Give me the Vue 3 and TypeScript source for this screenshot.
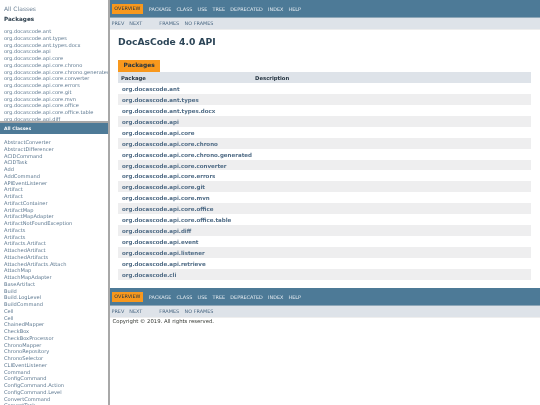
<script setup lang="ts">
const packages: string[] = [
  'org.docascode.ant','org.docascode.ant.types','org.docascode.ant.types.docx','org.docascode.api','org.docascode.api.core',
  'org.docascode.api.core.chrono','org.docascode.api.core.chrono.generated','org.docascode.api.core.converter','org.docascode.api.core.errors',
  'org.docascode.api.core.git','org.docascode.api.core.mvn','org.docascode.api.core.office','org.docascode.api.core.office.table',
  'org.docascode.api.diff','org.docascode.api.event','org.docascode.api.listener','org.docascode.api.retrieve','org.docascode.cli'
]
const classes: string[] = [
  'AbstractConverter','AbstractDifferencer','ACIDCommand','ACIDTask','Add','AddCommand','APIEventListener','Artifact','Artifact',
  'ArtifactContainer','ArtifactMap','ArtifactMapAdapter','ArtifactNotFoundException','Artifacts','Artifacts','Artifacts.Artifact',
  'AttachedArtifact','AttachedArtifacts','AttachedArtifacts.Attach','AttachMap','AttachMapAdapter','BaseArtifact','Build','Build.LogLevel',
  'BuildCommand','Cell','Cell','ChainedMapper','CheckBox','CheckBoxProcessor','ChronoMapper','ChronoRepository','ChronoSelector',
  'CLIEventListener','Command','ConfigCommand','ConfigCommand.Action','ConfigCommand.Level','ConvertCommand','ConvertTask'
]
const nav: string[] = ['PACKAGE','CLASS','USE','TREE','DEPRECATED','INDEX','HELP']
</script>

<template>
  <div class="page">
    <aside class="side">
      <div class="pkgpane">
        <div class="allclasses">All Classes</div>
        <div class="pkgtitle">Packages</div>
        <ul class="list">
          <li v-for="p in packages" :key="p">{{ p }}</li>
        </ul>
      </div>
      <div class="classpane">
        <div class="bar">All Classes</div>
        <ul class="list classlist">
          <li v-for="(c, i) in classes" :key="i">{{ c }}</li>
        </ul>
      </div>
    </aside>
    <main class="main">
      <div class="topnav">
        <span class="active">OVERVIEW</span>
        <span v-for="n in nav" :key="n" class="navitem">{{ n }}</span>
      </div>
      <div class="subnav">
        <span>PREV</span><span class="next">NEXT</span><span class="frames">FRAMES</span><span class="noframes">NO FRAMES</span>
      </div>
      <h1 class="title">DocAsCode 4.0 API</h1>
      <div class="tablewrap">
        <div class="caption">Packages</div>
        <div class="row head"><span class="col1">Package</span><span>Description</span></div>
        <div v-for="(p, i) in packages" :key="p" class="row" :class="{ alt: i % 2 === 1 }">
          <span class="plink">{{ p }}</span>
        </div>
      </div>
      <div class="topnav bottom">
        <span class="active">OVERVIEW</span>
        <span v-for="n in nav" :key="n" class="navitem">{{ n }}</span>
      </div>
      <div class="subnav">
        <span>PREV</span><span class="next">NEXT</span><span class="frames">FRAMES</span><span class="noframes">NO FRAMES</span>
      </div>
      <div class="copy">Copyright © 2019. All rights reserved.</div>
    </main>
  </div>
</template>

<style>
html, body { margin: 0; padding: 0; background: #fff; overflow: hidden; }
</style>

<style scoped>
.page {
  display: flex;
  width: 540px;
  height: 405px;
  overflow: hidden;
  font-family: "DejaVu Sans", sans-serif;
  background: #fff;
  filter: blur(0.3px);
}
.side {
  width: 107.5px;
  flex: none;
  display: flex;
  flex-direction: column;
}
.pkgpane {
  height: 121px;
  flex: none;
  overflow: hidden;
  padding: 4.5px 0 0 4px;
  box-sizing: border-box;
}
.allclasses { font-size: 6px; color: #6d8296; line-height: 7px; }
.pkgtitle { font-size: 5.7px; font-weight: 700; color: #2c3e4c; margin-top: 4px; line-height: 7px; }
.list { list-style: none; margin: 5.5px 0 0; padding: 0; white-space: nowrap; }
.list li { font-size: 5.1px; line-height: 6.75px; height: 6.75px; color: #5d7890; }
.classpane { flex: 1; min-height: 0; overflow: hidden; border-top: 2px solid #a8a8a8; }
.bar {
  background: #4d7a97;
  color: #fff;
  font-size: 4.5px;
  font-weight: 700;
  height: 11px;
  line-height: 12px;
  padding-left: 4px;
}
.classlist { margin: 5px 0 0 4px; }
.main {
  flex: 1;
  min-width: 0;
  border-left: 2.5px solid #a8a8a8;
  overflow: hidden;
}
.topnav {
  background: #4d7a97;
  height: 18px;
  display: flex;
  align-items: center;
  padding: 0.8px 0 0 2px;
  font-size: 4.9px;
  color: #e6ecf1;
  gap: 5.2px;
  box-sizing: border-box;
  border-bottom: 1px solid #8ea7b8;
}
.bottom { margin-top: 8px; }
.active {
  background: #f8981d;
  color: #253441;
  padding: 2.5px 2.8px;
  line-height: 5px;
  margin-right: 0.5px;
}
.subnav {
  background: #dee3e9;
  height: 12px;
  display: flex;
  align-items: center;
  padding: 0 0 1px 2px;
  box-sizing: border-box;
  font-size: 4.9px;
  color: #4a6782;
  border-bottom: 1px solid #eee;
}
.next { margin-left: 5px; }
.frames { margin-left: 17px; }
.noframes { margin-left: 5.5px; }
.title {
  font-size: 9.2px;
  font-weight: 700;
  color: #2c4557;
  margin: 0;
  padding: 5.5px 0 0 8.5px;
  line-height: 11px;
  height: 18.5px;
}
.tablewrap { margin: 6px 0 0 8.5px; width: 412.5px; }
.caption {
  display: block;
  width: fit-content;
  background: #f8981d;
  color: #253441;
  font-size: 5.9px;
  font-weight: 700;
  height: 12px;
  line-height: 11px;
  padding: 0 5.5px;
}
.row {
  height: 10.95px;
  line-height: 12px;
  display: flex;
  background: #fff;
  font-size: 5.5px;
  padding-left: 3px;
  box-sizing: border-box;
}
.alt { background: #eeeeef; }
.head {
  background: #dee3e9;
  color: #253441;
  font-weight: 700;
  font-size: 5.3px;
}
.col1 { width: 134px; }
.plink { color: #4f6b85; font-weight: 700; padding-left: 1px; }
.copy { font-size: 5.3px; color: #353833; padding: 0 0 0 3px; line-height: 7px; }
</style>
